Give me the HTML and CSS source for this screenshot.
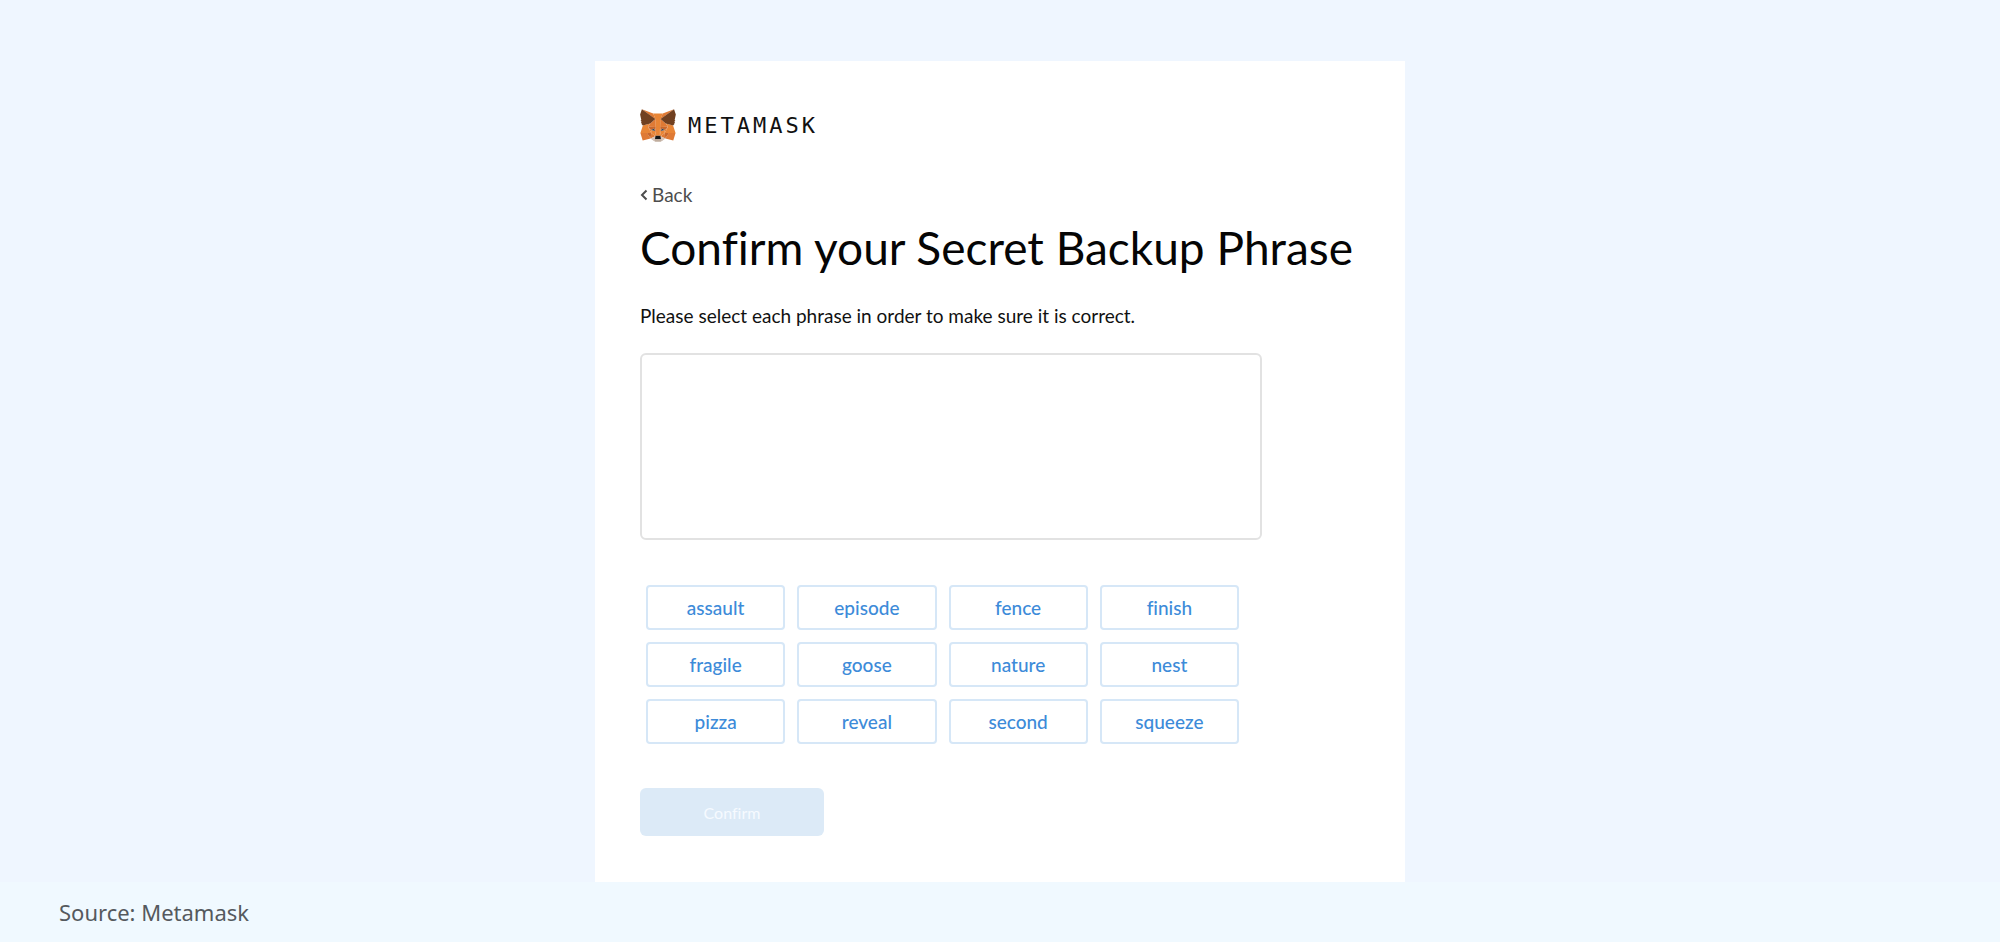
FILE: index.html
```html
<!DOCTYPE html>
<html lang="en">
<head>
<meta charset="utf-8">
<meta name="viewport" content="width=device-width, initial-scale=1">
<title>Confirm your Secret Backup Phrase</title>
<link rel="stylesheet" href="styles.css">
</head>
<body>
<main class="stage">
  <section class="card">
    <header class="brand">
      <svg class="brand-mark" viewBox="31 34 257 239" preserveAspectRatio="none" aria-hidden="true">
        <g fill="#df7a35">
          <path d="M274.1 35.5L174.6 109.4 193 65.8zM44.4 35.5L143.1 110.1 125.6 65.8z"/>
          <path d="M238.3 206.8L211.8 247.4 268.5 263 284.8 207.7zM33.9 207.7L50.1 263 106.8 247.4 80.3 206.8z"/>
          <path d="M103.6 138.2L87.8 162.1 144.1 164.6 142.1 104.1zM214.9 138.2L175.9 103.4 174.6 164.6 230.8 162.1z"/>
          <path d="M106.8 247.4L140.6 230.9 111.4 208.1zM177.9 230.9L211.8 247.4 207.1 208.1z"/>
          <path d="M87.8 162.1L111.4 208.1 110.6 185.2zM208.1 185.2L207.1 208.1 230.8 162.1z"/>
          <path d="M144.1 164.6L138.8 193.5 145.4 227.6 146.9 182.7zM174.6 164.6L171.9 182.6 173.1 227.6 179.8 193.5z"/>
        </g>
        <path fill="#d7c1b3" d="M211.8 247.4L177.9 230.9 180.6 253 180.3 262.3zM106.8 247.4L138.3 262.3 138.1 253 140.6 230.9z"/>
        <path fill="#c8672c" d="M106.8 247.4L111.6 206.8 80.3 207.7zM207 206.8L211.8 247.4 238.3 207.7zM230.8 162.1L174.6 164.6 179.8 193.5 188.1 176.1 208.1 185.2zM110.6 185.2L130.6 176.1 138.8 193.5 144.1 164.6 87.8 162.1z"/>
        <path fill="#e88536" d="M179.8 193.5L173.1 227.6 177.9 230.9 207.1 208.1 208.1 185.2zM110.6 185.2L111.4 208.1 140.6 230.9 145.4 227.6 138.8 193.5z"/>
        <path fill="#e88536" d="M267.2 153.5L214.9 138.2 230.8 162.1 207.1 208.1 238.3 207.7 284.8 207.7zM103.6 138.2L51.3 153.5 33.9 207.7 80.3 207.7 111.4 208.1 87.8 162.1zM174.6 164.6L177.9 106.9 193.1 65.8 125.6 65.8 140.6 106.9 144.1 164.6 145.3 182.8 145.4 227.6 173.1 227.6 173.3 182.8z"/>
        <path fill="#3a4450" d="M138.8 193.5L110.6 185.2 130.5 176.1zM179.7 193.5L188 176.1 208 185.2z"/>
        <path fill="#c0ad9e" d="M180.3 262.3L180.6 253 178.1 250.8 140.4 250.8 138.1 253 138.3 262.3 106.8 247.4 117.8 256.4 140.1 271.9 178.4 271.9 200.8 256.4 211.8 247.4z"/>
        <path fill="#161616" d="M177.9 230.9L173.1 227.6 145.4 227.6 140.6 230.9 138.1 253 140.4 250.8 178.1 250.8 180.6 253z"/>
        <path fill="#714020" d="M278.3 114.2L286.8 73.4 274.1 35.5 177.9 106.9 214.9 138.2 267.2 153.5 278.8 140 273.8 136.4 281.8 129.1 275.6 124.3 283.6 118.2zM31.8 73.4L40.3 114.2 34.9 118.2 42.9 124.3 36.8 129.1 44.8 136.4 39.8 140 51.3 153.5 103.6 138.2 140.6 106.9 44.4 35.5z"/>
      </svg>
      <span class="brand-name">METAMASK</span>
    </header>
    <a class="back" href="#"><svg class="back-icon" viewBox="0 0 8 12" aria-hidden="true"><path d="M6.500 1.500L2 6l4.500 4.500"/></svg>Back</a>
    <h1 class="title">Confirm your Secret Backup Phrase</h1>
    <p class="hint" id="hint">Please select each phrase in order to make sure it is correct.</p>
    <div class="selection" role="group" aria-labelledby="hint"></div>
    <div class="words">
      <button class="word" type="button">assault</button>
      <button class="word" type="button">episode</button>
      <button class="word" type="button">fence</button>
      <button class="word" type="button">finish</button>
      <button class="word" type="button">fragile</button>
      <button class="word" type="button">goose</button>
      <button class="word" type="button">nature</button>
      <button class="word" type="button">nest</button>
      <button class="word" type="button">pizza</button>
      <button class="word" type="button">reveal</button>
      <button class="word" type="button">second</button>
      <button class="word" type="button">squeeze</button>
    </div>
    <button class="confirm" type="button" disabled>Confirm</button>
  </section>
</main>
<footer class="source">Source: Metamask</footer>
</body>
</html>
```
FILE: styles.css
```css
* {
  box-sizing: border-box;
}

body {
  margin: 0;
  min-height: 100vh;
  display: flex;
  flex-direction: column;
  background: #eff6ff;
  color: #111;
  font-family: Lato, "Liberation Sans", sans-serif;
  font-variant-ligatures: none;
}

button {
  font-family: inherit;
  font-variant-ligatures: inherit;
  cursor: pointer;
}

.stage {
  flex: 1;
  display: flex;
  justify-content: center;
  padding-top: 61px;
}

.card {
  width: 100%;
  max-width: 810px;
  padding: 46px 45px;
  background: #fff;
  display: flex;
  flex-direction: column;
  align-items: flex-start;
}

.brand {
  display: flex;
  align-items: center;
  gap: 12px;
  height: 36px;
}

.brand-mark {
  width: 36px;
  height: 33px;
}

.brand-name {
  font-family: "DejaVu Sans Mono", monospace;
  font-size: 22px;
  letter-spacing: 3px;
  color: #111;
}

.back {
  display: flex;
  align-items: center;
  gap: 4px;
  margin-top: 40px;
  font-size: 19px;
  line-height: 24px;
  color: #4d4d4d;
  text-decoration: none;
}

.back-icon {
  width: 8px;
  height: 12px;
  fill: none;
  stroke: currentColor;
  stroke-width: 2;
}

.title {
  margin: 11px 0 0;
  font-size: 46px;
  line-height: 60px;
  font-weight: 400;
  color: #050505;
}

.hint {
  margin: 26px 0 0;
  font-size: 19px;
  line-height: 24px;
}

.selection {
  width: 100%;
  max-width: 622px;
  height: 187px;
  margin-top: 25px;
  border: 2px solid #e2e2e2;
  border-radius: 6px;
}

.words {
  width: 100%;
  max-width: 599px;
  display: grid;
  grid-template-columns: repeat(4, 1fr);
  gap: 12px;
  margin-top: 45px;
  padding-left: 6px;
}

.word {
  height: 45px;
  padding: 0;
  border: 2px solid #d6e7f7;
  border-radius: 4px;
  background: #fff;
  color: #3d8bd9;
  font-size: 19px;
  font-weight: 500;
}

.confirm {
  width: 184px;
  height: 48px;
  margin-top: 44px;
  border: 0;
  border-radius: 6px;
  background: #dceaf7;
  color: #f6faff;
  font-size: 16px;
}

.source {
  padding: 0 59px;
  background: #f0f9ff;
  color: #55595e;
  font-family: "Noto Sans", sans-serif;
  font-size: 22px;
  line-height: 60px;
}
```
